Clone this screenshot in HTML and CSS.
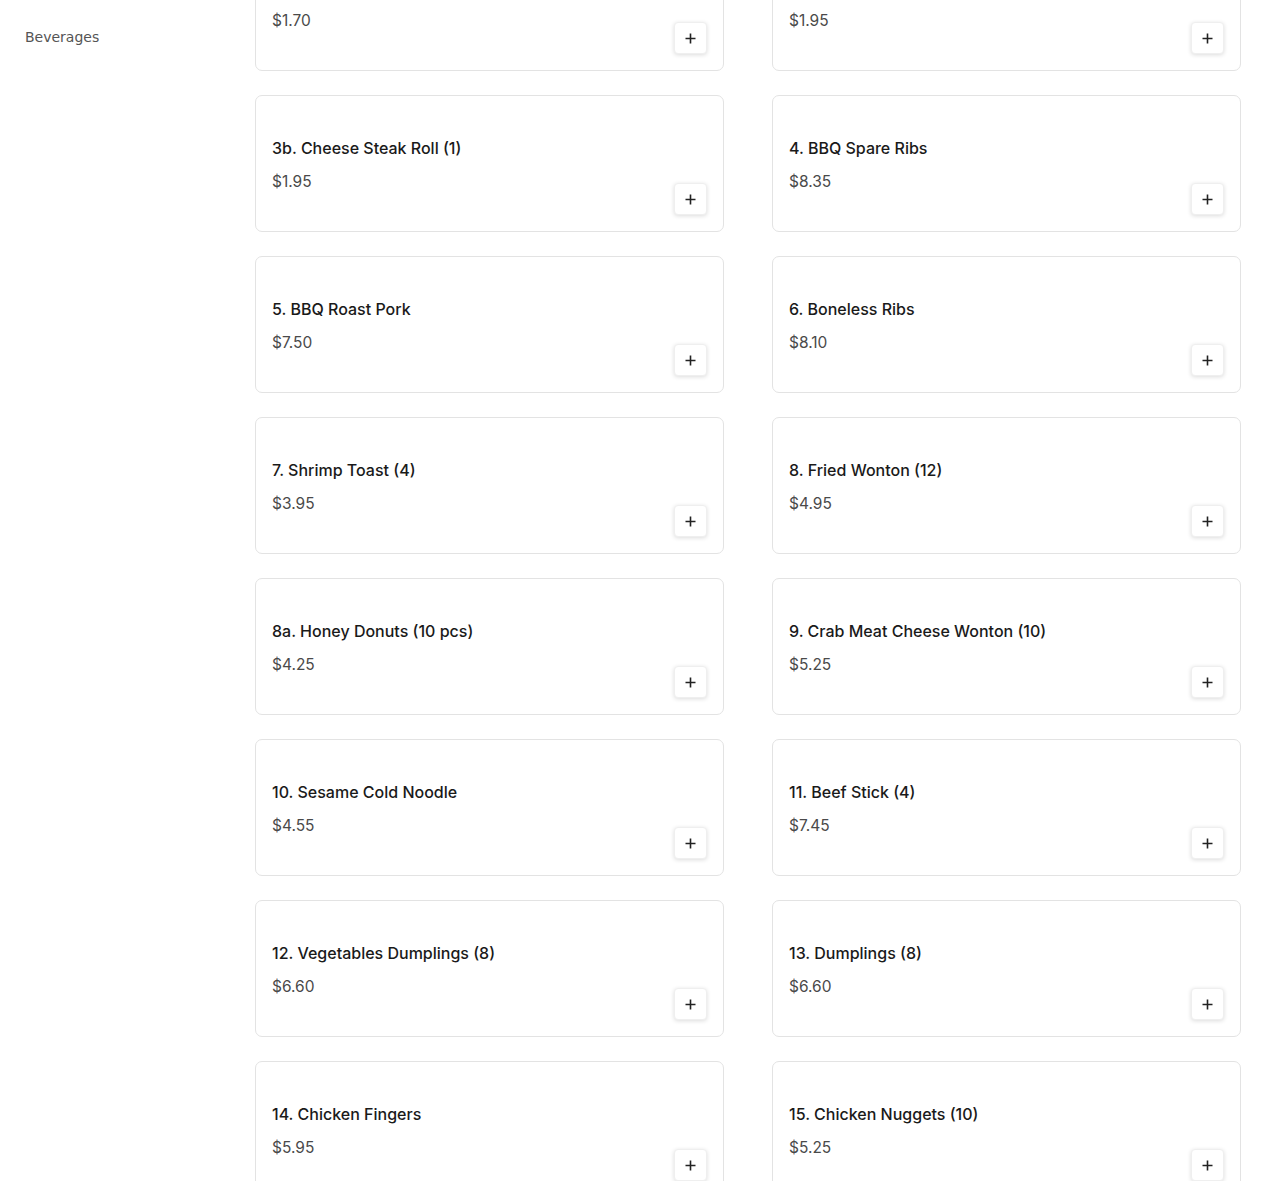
FILE: index.html
```html
<!DOCTYPE html>
<html lang="en">
<head>
<meta charset="utf-8">
<title>Menu</title>
<link rel="stylesheet" href="styles.css">
</head>
<body>
<div class="layout">
  <aside class="sidebar">
    <a class="cat-link" href="#">Beverages</a>
  </aside>
  <main class="menu">
    <div class="grid">
      <div class="card"><div class="info"><div class="title">3. Egg Roll (1)</div><div class="price">$1.70</div></div><button class="add"><svg width="11" height="11" viewBox="0 0 11 11"><path d="M5.5 0.5v10M0.5 5.5h10" stroke="#222" stroke-width="1.6" fill="none"/></svg></button></div>
      <div class="card"><div class="info"><div class="title">3a. Spring Roll (1)</div><div class="price">$1.95</div></div><button class="add"><svg width="11" height="11" viewBox="0 0 11 11"><path d="M5.5 0.5v10M0.5 5.5h10" stroke="#222" stroke-width="1.6" fill="none"/></svg></button></div>
      <div class="card"><div class="info"><div class="title">3b. Cheese Steak Roll (1)</div><div class="price">$1.95</div></div><button class="add"><svg width="11" height="11" viewBox="0 0 11 11"><path d="M5.5 0.5v10M0.5 5.5h10" stroke="#222" stroke-width="1.6" fill="none"/></svg></button></div>
      <div class="card"><div class="info"><div class="title">4. BBQ Spare Ribs</div><div class="price">$8.35</div></div><button class="add"><svg width="11" height="11" viewBox="0 0 11 11"><path d="M5.5 0.5v10M0.5 5.5h10" stroke="#222" stroke-width="1.6" fill="none"/></svg></button></div>
      <div class="card"><div class="info"><div class="title">5. BBQ Roast Pork</div><div class="price">$7.50</div></div><button class="add"><svg width="11" height="11" viewBox="0 0 11 11"><path d="M5.5 0.5v10M0.5 5.5h10" stroke="#222" stroke-width="1.6" fill="none"/></svg></button></div>
      <div class="card"><div class="info"><div class="title">6. Boneless Ribs</div><div class="price">$8.10</div></div><button class="add"><svg width="11" height="11" viewBox="0 0 11 11"><path d="M5.5 0.5v10M0.5 5.5h10" stroke="#222" stroke-width="1.6" fill="none"/></svg></button></div>
      <div class="card"><div class="info"><div class="title">7. Shrimp Toast (4)</div><div class="price">$3.95</div></div><button class="add"><svg width="11" height="11" viewBox="0 0 11 11"><path d="M5.5 0.5v10M0.5 5.5h10" stroke="#222" stroke-width="1.6" fill="none"/></svg></button></div>
      <div class="card"><div class="info"><div class="title">8. Fried Wonton (12)</div><div class="price">$4.95</div></div><button class="add"><svg width="11" height="11" viewBox="0 0 11 11"><path d="M5.5 0.5v10M0.5 5.5h10" stroke="#222" stroke-width="1.6" fill="none"/></svg></button></div>
      <div class="card"><div class="info"><div class="title">8a. Honey Donuts (10 pcs)</div><div class="price">$4.25</div></div><button class="add"><svg width="11" height="11" viewBox="0 0 11 11"><path d="M5.5 0.5v10M0.5 5.5h10" stroke="#222" stroke-width="1.6" fill="none"/></svg></button></div>
      <div class="card"><div class="info"><div class="title">9. Crab Meat Cheese Wonton (10)</div><div class="price">$5.25</div></div><button class="add"><svg width="11" height="11" viewBox="0 0 11 11"><path d="M5.5 0.5v10M0.5 5.5h10" stroke="#222" stroke-width="1.6" fill="none"/></svg></button></div>
      <div class="card"><div class="info"><div class="title">10. Sesame Cold Noodle</div><div class="price">$4.55</div></div><button class="add"><svg width="11" height="11" viewBox="0 0 11 11"><path d="M5.5 0.5v10M0.5 5.5h10" stroke="#222" stroke-width="1.6" fill="none"/></svg></button></div>
      <div class="card"><div class="info"><div class="title">11. Beef Stick (4)</div><div class="price">$7.45</div></div><button class="add"><svg width="11" height="11" viewBox="0 0 11 11"><path d="M5.5 0.5v10M0.5 5.5h10" stroke="#222" stroke-width="1.6" fill="none"/></svg></button></div>
      <div class="card"><div class="info"><div class="title">12. Vegetables Dumplings (8)</div><div class="price">$6.60</div></div><button class="add"><svg width="11" height="11" viewBox="0 0 11 11"><path d="M5.5 0.5v10M0.5 5.5h10" stroke="#222" stroke-width="1.6" fill="none"/></svg></button></div>
      <div class="card"><div class="info"><div class="title">13. Dumplings (8)</div><div class="price">$6.60</div></div><button class="add"><svg width="11" height="11" viewBox="0 0 11 11"><path d="M5.5 0.5v10M0.5 5.5h10" stroke="#222" stroke-width="1.6" fill="none"/></svg></button></div>
      <div class="card"><div class="info"><div class="title">14. Chicken Fingers</div><div class="price">$5.95</div></div><button class="add"><svg width="11" height="11" viewBox="0 0 11 11"><path d="M5.5 0.5v10M0.5 5.5h10" stroke="#222" stroke-width="1.6" fill="none"/></svg></button></div>
      <div class="card"><div class="info"><div class="title">15. Chicken Nuggets (10)</div><div class="price">$5.25</div></div><button class="add"><svg width="11" height="11" viewBox="0 0 11 11"><path d="M5.5 0.5v10M0.5 5.5h10" stroke="#222" stroke-width="1.6" fill="none"/></svg></button></div>
    </div>
  </main>
</div>
</body>
</html>
```
FILE: styles.css
```css
html, body {
  margin: 0;
  padding: 0;
  background: #fff;
  overflow: hidden;
}
.layout {
  display: grid;
  grid-template-columns: 255px 1fr;
  height: 1181px;
  overflow: hidden;
}
.sidebar {
  padding: 28px 0 0 25px;
}
.cat-link {
  font-family: "DejaVu Sans", sans-serif;
  font-size: 14px;
  line-height: 18px;
  color: #555;
  text-decoration: none;
}
.menu {
  margin-top: -66px;
  padding-right: 29px;
}
.grid {
  display: grid;
  grid-template-columns: 469px 469px;
  column-gap: 48px;
  row-gap: 24px;
}
.card {
  box-sizing: border-box;
  height: 137px;
  border: 1px solid #e3e3e3;
  border-radius: 7px;
  padding: 16px;
  display: flex;
  align-items: center;
  font-family: "Inter", sans-serif;
}
.info {
  flex: 1;
  display: flex;
  flex-direction: column;
  gap: 12px;
}
.title {
  font-size: 16px;
  line-height: 24px;
  font-weight: 500;
  color: #1a1a1a;
}
.price {
  font-size: 15.5px;
  line-height: 20px;
  font-weight: 400;
  color: #4a4a4a;
}
.add {
  align-self: flex-end;
  width: 33px;
  height: 32px;
  padding: 0;
  border: 1px solid #efefef;
  border-radius: 4px;
  background: #fff;
  box-shadow: 0 1px 4px rgba(0, 0, 0, 0.14);
  display: flex;
  align-items: center;
  justify-content: center;
}
```
